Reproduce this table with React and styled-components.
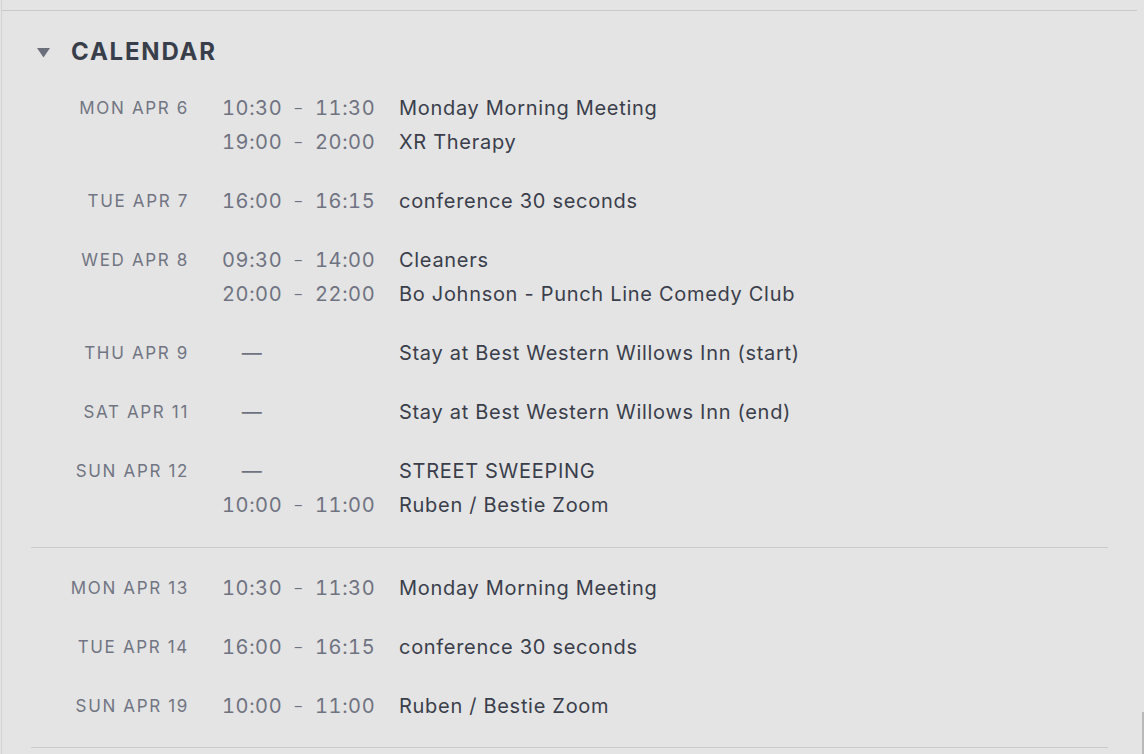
import React from "react";
import styled, { createGlobalStyle } from "styled-components";

const Global = createGlobalStyle`
  html, body { margin: 0; padding: 0; background: #e4e4e4; }
  body { font-family: Inter, "Noto Sans", "Liberation Sans", sans-serif; -webkit-font-smoothing: antialiased; }
`;

const Frame = styled.div`
  min-height: 754px;
  box-sizing: border-box;
  border-left: 1px solid #d2d2d2;
  margin-left: 1px;
  padding-right: 7px;
  padding-top: 10px;
`;

const TopRule = styled.div`
  height: 1px;
  background: #c9c9c9;
`;

const Header = styled.div`
  display: flex;
  align-items: center;
  height: 32px;
  margin-top: 25px;
  padding-left: 34px;
  gap: 20px;
`;

const Caret = styled.svg`
  width: 15px;
  height: 11px;
  flex: none;
  margin-top: 1px;
`;

const Title = styled.h2`
  margin: 0;
  font-size: 24px;
  font-weight: 700;
  letter-spacing: 1.8px;
  color: #393e4b;
  line-height: 32px;
`;

const Week = styled.section`
  margin: 0 29px 0 29px;
  padding: 23px 0 25px;
  border-bottom: 1px solid #cbcbcb;
  display: flex;
  flex-direction: column;
  gap: 25px;

  &:last-of-type {
    padding-bottom: 24px;
  }
`;

const Day = styled.div`
  display: grid;
  grid-template-columns: 158px 1fr;
  column-gap: 33px;
`;

const DateLabel = styled.div`
  text-align: right;
  font-size: 17px;
  letter-spacing: 1.65px;
  color: #717583;
  line-height: 34px;
  white-space: nowrap;
`;

const Events = styled.div`
  display: flex;
  flex-direction: column;
`;

const EventRow = styled.div`
  display: grid;
  grid-template-columns: 153px 1fr;
  column-gap: 24px;
  height: 34px;
  align-items: center;
  font-size: 20px;
  line-height: 34px;
`;

const Time = styled.div`
  display: grid;
  grid-template-columns: 60px 1fr 60px;
  color: #6f7381;
  font-variant-numeric: tabular-nums;
  letter-spacing: 0.6px;
  white-space: nowrap;
`;

const Start = styled.span`
  text-align: ${(p) => (p.$allDay ? "center" : "left")};
`;

const Dash = styled.span`
  text-align: center;
  font-size: 14px;
`;

const End = styled.span`
  text-align: right;
`;

const EventName = styled.div`
  color: #3a3e4b;
  letter-spacing: 0.7px;
  white-space: nowrap;
`;

const Scroll = styled.div`
  position: fixed;
  right: 0;
  top: 712px;
  bottom: 0;
  width: 2px;
  background: #b9b9b9;
`;

const weeks = [
  [
    { date: "MON APR 6", events: [["10:30", "11:30", "Monday Morning Meeting"], ["19:00", "20:00", "XR Therapy"]] },
    { date: "TUE APR 7", events: [["16:00", "16:15", "conference 30 seconds"]] },
    { date: "WED APR 8", events: [["09:30", "14:00", "Cleaners"], ["20:00", "22:00", "Bo Johnson - Punch Line Comedy Club"]] },
    { date: "THU APR 9", events: [[null, null, "Stay at Best Western Willows Inn (start)"]] },
    { date: "SAT APR 11", events: [[null, null, "Stay at Best Western Willows Inn (end)"]] },
    { date: "SUN APR 12", events: [[null, null, "STREET SWEEPING"], ["10:00", "11:00", "Ruben / Bestie Zoom"]] },
  ],
  [
    { date: "MON APR 13", events: [["10:30", "11:30", "Monday Morning Meeting"]] },
    { date: "TUE APR 14", events: [["16:00", "16:15", "conference 30 seconds"]] },
    { date: "SUN APR 19", events: [["10:00", "11:00", "Ruben / Bestie Zoom"]] },
  ],
];

export default function App() {
  return (
    <>
      <Global />
      <Frame>
        <TopRule />
        <Header>
          <Caret viewBox="0 0 15 11">
            <path d="M1 1 L14 1 L7.5 10.5 Z" fill="#6b6e7b" />
          </Caret>
          <Title>CALENDAR</Title>
        </Header>
        {weeks.map((week, wi) => (
          <Week key={wi}>
            {week.map((day) => (
              <Day key={day.date}>
                <DateLabel>{day.date}</DateLabel>
                <Events>
                  {day.events.map(([s, e, name]) => (
                    <EventRow key={name}>
                      {s ? (
                        <Time>
                          <Start>{s}</Start>
                          <Dash>–</Dash>
                          <End>{e}</End>
                        </Time>
                      ) : (
                        <Time>
                          <Start $allDay>—</Start>
                        </Time>
                      )}
                      <EventName>{name}</EventName>
                    </EventRow>
                  ))}
                </Events>
              </Day>
            ))}
          </Week>
        ))}
      </Frame>
      <Scroll />
    </>
  );
}
